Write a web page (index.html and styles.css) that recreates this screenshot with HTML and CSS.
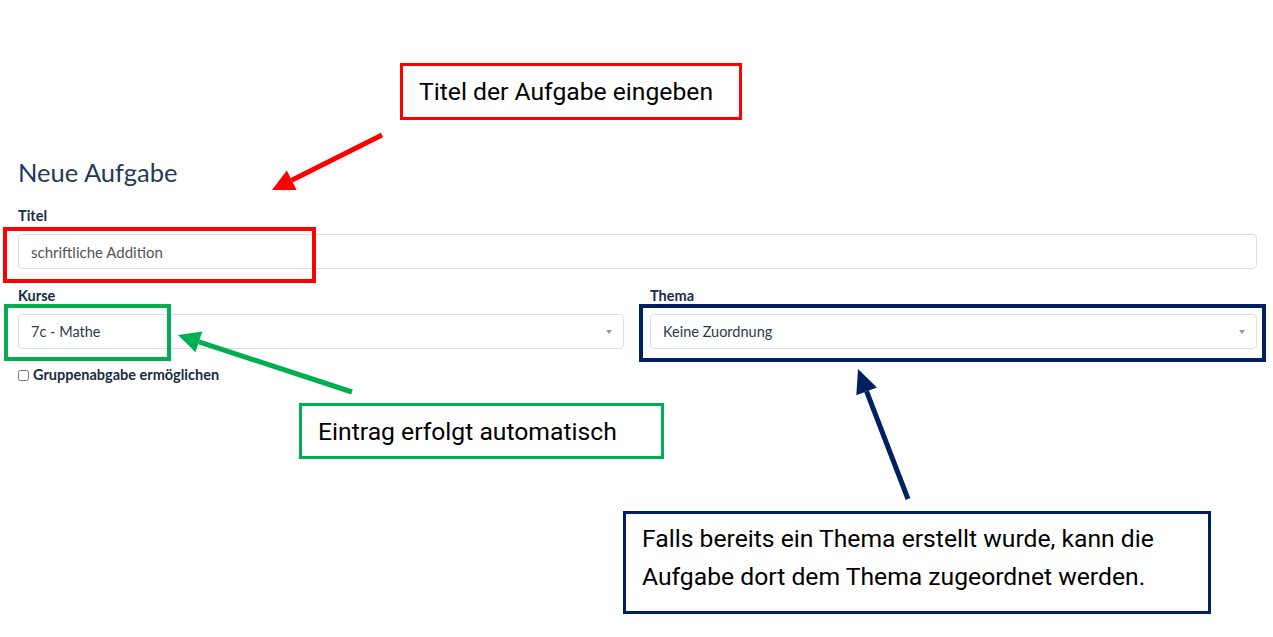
FILE: index.html
```html
<!DOCTYPE html>
<html lang="de">
<head>
  <meta charset="UTF-8" />
  <meta name="viewport" content="width=device-width, initial-scale=1.0">
  <title>Neue Aufgabe</title>
  <link rel="stylesheet" href="styles.css">
</head>
<body>
  <main class="page">
    <form class="task-form">
      <h2 class="form-title">Neue Aufgabe</h2>

      <div class="field">
        <label class="field-label">Titel</label>
        <input class="control" type="text" value="schriftliche Addition">
      </div>

      <div class="field-row">
        <div class="field">
          <label class="field-label">Kurse</label>
          <div class="control select">
            <span>7c - Mathe</span>
            <span class="caret"></span>
          </div>
          <label class="check">
            <input type="checkbox">
            <span>Gruppenabgabe ermöglichen</span>
          </label>
        </div>
        <div class="field">
          <label class="field-label">Thema</label>
          <div class="control select">
            <span>Keine Zuordnung</span>
            <span class="caret"></span>
          </div>
        </div>
      </div>
    </form>

    <!-- annotations drawn over the screenshot -->
    <div class="frame frame-red"></div>
    <div class="frame frame-green"></div>
    <div class="frame frame-navy"></div>

    <div class="note note-red">Titel der Aufgabe eingeben</div>
    <div class="note note-green">Eintrag erfolgt automatisch</div>
    <div class="note note-navy">Falls bereits ein Thema erstellt wurde, kann die<br>Aufgabe dort dem Thema zugeordnet werden.</div>

    <svg class="arrows" width="1273" height="637" viewBox="0 0 1273 637">
      <line x1="382" y1="135" x2="291.7" y2="180.2" stroke="#ff0000" stroke-width="5"/>
      <polygon points="272,190 296.6,190 286.8,170.4" fill="#ff0000"/>

      <line x1="352" y1="392" x2="198.9" y2="341.8" stroke="#00b050" stroke-width="5"/>
      <polygon points="178,335 202.3,331.4 195.5,352.3" fill="#00b050"/>

      <line x1="908" y1="499" x2="866.6" y2="391.4" stroke="#002060" stroke-width="5"/>
      <polygon points="858,369 876.9,387.5 856.3,395.3" fill="#002060"/>
    </svg>
  </main>
</body>
</html>
```

FILE: styles.css
```css
html, body {
  margin: 0;
  padding: 0;
  background: #fff;
}
body {
  font-family: Lato, 'Noto Sans', Arial, sans-serif;
  color: #1b2d44;
}
.page {
  position: relative;
  width: 1273px;
  height: 637px;
  overflow: hidden;
  box-sizing: border-box;
  padding: 158px 16px 0 18px;
}
.form-title {
  margin: 0 0 21px 0;
  font-size: 25.5px;
  line-height: 28px;
  font-weight: 400;
  color: #1f3b5b;
}
.field {
  display: flex;
  flex-direction: column;
}
.field-label {
  font-size: 14.5px;
  line-height: 18px;
  font-weight: bold;
  color: #1a2c42;
  margin-bottom: 9px;
}
.control {
  box-sizing: border-box;
  height: 35px;
  width: 100%;
  border: 1px solid #dcdfe3;
  border-radius: 4px;
  padding: 0 12px;
  font-family: inherit;
  font-size: 15px;
  color: #555;
  background: #fff;
  outline: none;
}
.field-row {
  display: grid;
  grid-template-columns: 606px 607px;
  column-gap: 26px;
  margin-top: 18px;
}
.select {
  display: flex;
  align-items: center;
  justify-content: space-between;
  font-size: 14.5px;
  color: #2c3a4b;
}
.caret {
  width: 0;
  height: 0;
  border-left: 3px solid transparent;
  border-right: 3px solid transparent;
  border-top: 4px solid #999;
  margin-right: -1px;
}
.check {
  display: flex;
  align-items: center;
  gap: 4px;
  margin-top: 17px;
  font-size: 14.5px;
  line-height: 18px;
  font-weight: bold;
  color: #1a2c42;
}
.check input {
  margin: 0;
  width: 11px;
  height: 11px;
}

/* annotation layer */
.frame {
  position: absolute;
  box-sizing: border-box;
  border: 4px solid;
}
.frame-red {
  left: 3px;
  top: 227px;
  width: 313px;
  height: 56px;
  border-color: #ff0000;
}
.frame-green {
  left: 4px;
  top: 304px;
  width: 167px;
  height: 57px;
  border-color: #00b050;
}
.frame-navy {
  left: 639px;
  top: 304px;
  width: 627px;
  height: 58px;
  border-color: #002060;
}
.note {
  position: absolute;
  box-sizing: border-box;
  border: 3px solid;
  background: #fff;
  font-family: Roboto, 'Noto Sans', Arial, sans-serif;
  font-size: 24.7px;
  color: #000;
  display: flex;
  align-items: center;
  padding: 0 16px;
}
.note-red {
  left: 400px;
  top: 63px;
  width: 342px;
  height: 57px;
  border-color: #ff0000;
}
.note-green {
  left: 299px;
  top: 403px;
  width: 365px;
  height: 56px;
  border-color: #00b050;
}
.note-navy {
  left: 623px;
  top: 511px;
  width: 588px;
  height: 103px;
  border-color: #002060;
  align-items: flex-start;
  padding-top: 6px;
  line-height: 38px;
}
.arrows {
  position: absolute;
  left: 0;
  top: 0;
  pointer-events: none;
}
```
